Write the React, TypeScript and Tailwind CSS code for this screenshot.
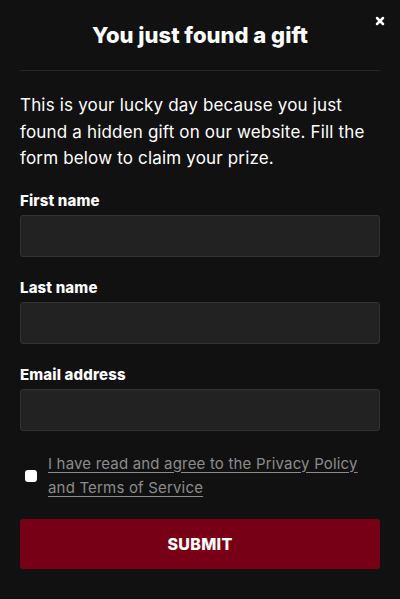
import { X } from "lucide-react";

const fields = ["First name", "Last name", "Email address"];

export default function App() {
    return (
        <div className="min-h-[599px] w-[400px] bg-[#111111] px-5 text-white" style={{ fontFamily: "Inter, 'Noto Sans', sans-serif" }}>
            <div className="relative pt-[19px] pb-[19px] border-b border-[#262626]">
                <h2 className="text-center text-[22px] font-extrabold leading-[32px]">You just found a gift</h2>
                <button className="absolute right-[-8px] top-[13px] p-0.5 text-white">
                    <X className="h-[12px] w-[12px]" strokeWidth={5} />
                </button>
            </div>

            <p className="mt-[21px] text-[17px] leading-[26.5px] tracking-[0.01em] text-white">
                This is your lucky day because you just found a hidden gift on our website. Fill the form below to claim your prize.
            </p>

            <form className="mt-[18px]">
                {fields.map((label) => (
                    <div key={label} className="mb-[20px]">
                        <label className="block text-[15px] font-extrabold leading-[22px] tracking-[0.01em]">{label}</label>
                        <input
                            type="text"
                            className="mt-[3px] block h-[42px] w-full rounded-[3px] border border-[#333333] bg-[#222222] px-3 text-white outline-none"
                        />
                    </div>
                ))}

                <div className="mt-[21px] flex items-center gap-[11px]">
                    <span className="ml-[5px] block h-[12px] w-[12px] shrink-0 rounded-[3px] bg-white" />
                    <a href="#" className="text-[15px] leading-[24px] tracking-[0.012em] text-[#8c8c8c] underline underline-offset-[3px] decoration-[#8c8c8c]">
                        I have read and agree to the Privacy Policy and Terms of Service
                    </a>
                </div>

                <button
                    type="button"
                    className="mt-[19px] block h-[50px] w-full rounded-[3px] bg-[#780016] text-[16px] font-extrabold uppercase tracking-[0.02em] text-white"
                >
                    Submit
                </button>
            </form>
        </div>
    );
}
